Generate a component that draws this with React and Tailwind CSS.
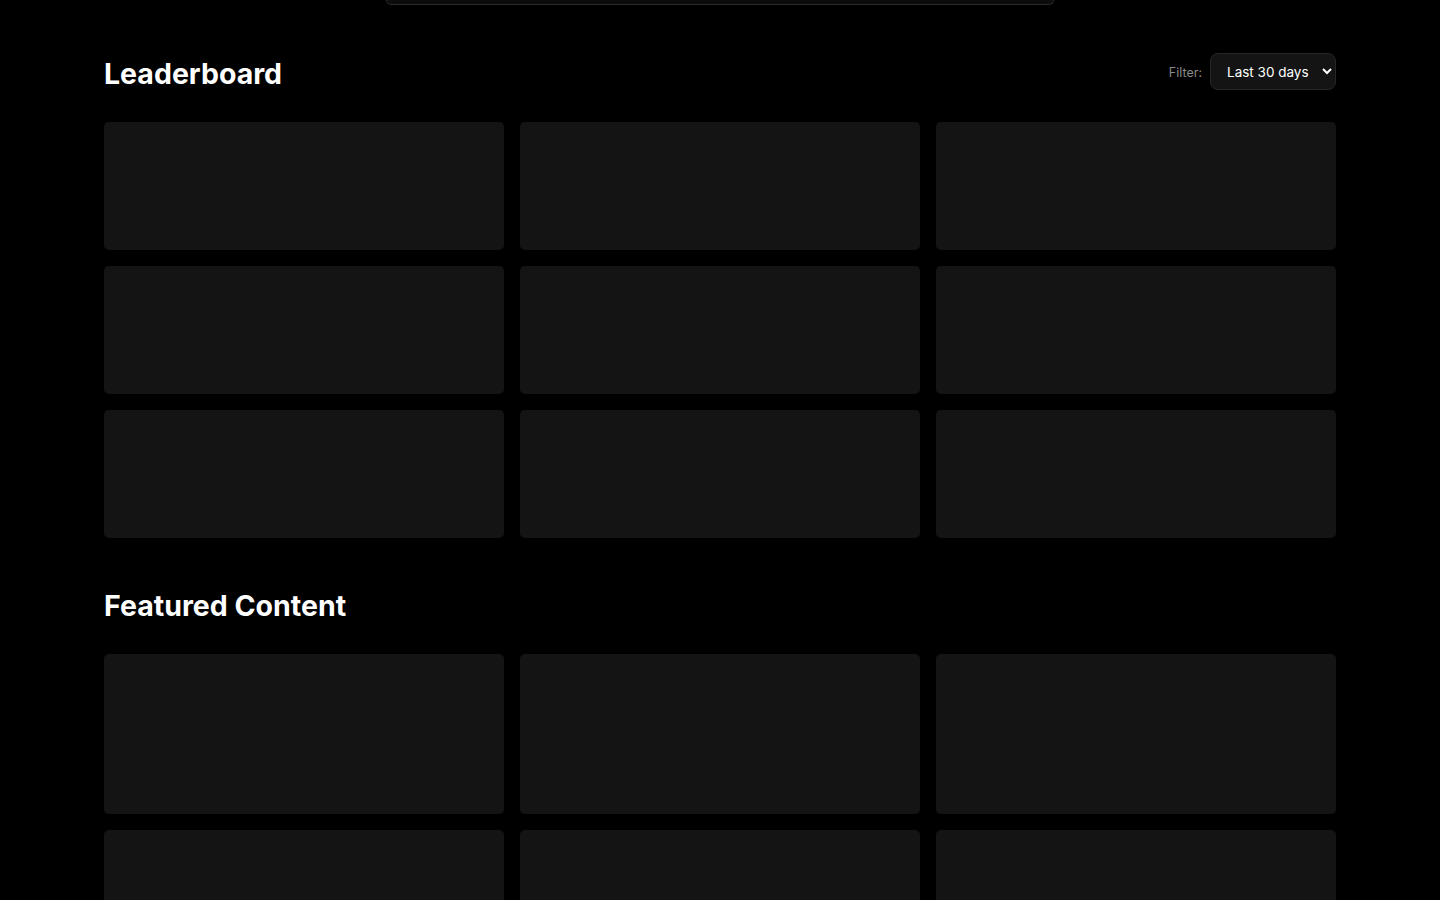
import React from "react";

function Card({ h }) {
  return <div className={`rounded-[5px] bg-[#141414] ${h}`} />;
}

export default function App() {
  const font = { fontFamily: "Inter, 'Liberation Sans', sans-serif" };
  return (
    <div className="min-h-screen bg-black text-white" style={font}>
      <div className="mx-auto h-[5px] w-[668px] rounded-b-xl border border-t-0 border-[#2a2a2a] bg-[#0c0c0c]" />
      <main className="mx-auto w-[1232px] pt-12">
        <section>
          <div className="mb-8 flex h-[37px] items-center justify-between">
            <h2 className="pt-[5px] text-[28.5px] font-bold">Leaderboard</h2>
            <div className="flex items-center gap-2">
              <span className="pt-[3px] text-[12.5px] text-[#8a8a8a]">Filter:</span>
              <select
                defaultValue="30"
                className="h-[37px] w-[126px] rounded-lg border border-[#262626] bg-[#141414] pl-3 pr-1 text-[13.5px] text-white [color-scheme:dark]"
              >
                <option value="7">Last 7 days</option>
                <option value="30">Last 30 days</option>
                <option value="90">Last 90 days</option>
              </select>
            </div>
          </div>
          <div className="grid grid-cols-3 gap-4">
            {Array.from({ length: 9 }).map((_, i) => (
              <Card key={i} h="h-32" />
            ))}
          </div>
        </section>
        <section className="mt-[47px]">
          <div className="mb-8 flex h-[37px] items-center">
            <h2 className="pt-[5px] text-[28.5px] font-bold">Featured Content</h2>
          </div>
          <div className="grid grid-cols-3 gap-4">
            {Array.from({ length: 6 }).map((_, i) => (
              <Card key={i} h="h-40" />
            ))}
          </div>
        </section>
      </main>
    </div>
  );
}
